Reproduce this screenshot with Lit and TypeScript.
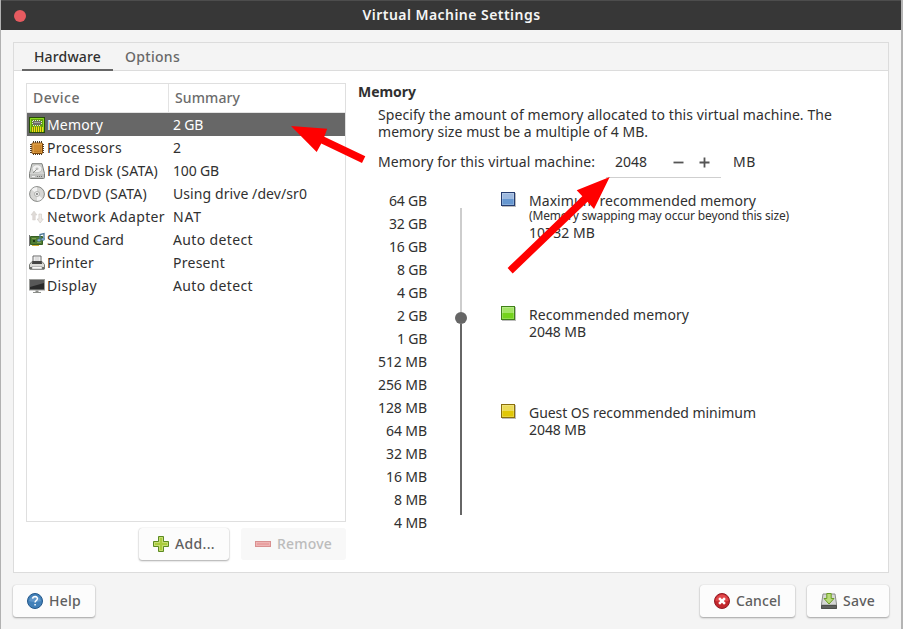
import { LitElement, html, css, svg } from "lit";
import { customElement, property } from "lit/decorators.js";

/** A single line of text whose tracking is adjusted to a given advance width. */
@customElement("text-run")
class TextRun extends LitElement {
  @property({ type: Number }) width = 0;
  @property() text = "";
  static styles = css`
    :host { display: inline-block; white-space: pre; }
    .run { display: inline-block; }
  `;
  render() {
    return html`<span class="run">${this.text}</span>`;
  }
  updated() {
    const run = this.renderRoot.querySelector(".run") as HTMLElement;
    run.style.letterSpacing = "0px";
    const natural = run.getBoundingClientRect().width;
    if (this.width && natural) {
      run.style.letterSpacing = `${(this.width - natural) / this.text.length}px`;
    }
  }
}

const t = (text: string, width: number) => html`<text-run .text=${text} .width=${width}></text-run>`;

const icons: Record<string, unknown> = {
  memory: svg`
    <rect x=".5" y=".5" width="15" height="15" fill="#63a010" stroke="#264d05"/>
    <path d="M1.500 14.500V1.500H14.500V14.500" fill="none" stroke="#8fdc22"/>
    <path d="M2 10H14V15H2Z" fill="#6b8a0a"/>
    <path d="M3.500 10V15M5.500 9.500V15M7.500 9.500V15M9.500 9.500V15M11.500 9.500V15M13.500 10V15" stroke="#f2e012" stroke-width="1.100"/>
    <rect x="4" y="4" width="8" height="4" fill="#6c6e68"/>
    <path d="M4.500 3V4M6.500 3V4M8.500 3V4M10.500 3V4M4.500 8V9M6.500 8V9M8.500 8V9M10.500 8V9M3 4.500H4M12 4.500H13M3 6.500H4M12 6.500H13" stroke="#e6e8e0"/>
    <path d="M5 5.500H11" stroke="#a5a7a1"/>`,
  cpu: svg`
    <path d="M4.500 1V15M6.500 1V15M8.500 1V15M10.500 1V15M12.500 1V15M1 4.500H15M1 6.500H15M1 8.500H15M1 10.500H15M1 12.500H15" stroke="#4b3d2b" stroke-width="1"/>
    <rect x="3" y="3" width="10.500" height="10.500" rx=".8" fill="#cd8a31" stroke="#7c4507"/>
    <rect x="4" y="4" width="8.500" height="8.500" fill="#cf8b31" stroke="#efb762" stroke-width=".8"/>
    <path d="M5 12H12V5" fill="none" stroke="#b97420"/>`,
  disk: svg`
    <path d="M3 .7H13L15.500 10.500V14.500Q15.500 15.500 14.500 15.500H1.500Q.5 15.500 .5 14.500V10.500Z" fill="#d3d4d2" stroke="#7e807d"/>
    <ellipse cx="8" cy="5.700" rx="5" ry="4" fill="#f1f1f0" stroke="#b0b1af" stroke-width=".7"/>
    <ellipse cx="8" cy="5.700" rx="1.500" ry="1.200" fill="#bcbdbb"/>
    <path d="M4 10L7.500 6.500" stroke="#888a86"/>
    <path d="M1 11H15V15H1Z" fill="#bfc0be"/><path d="M8 13.500H13" stroke="#747573" stroke-dasharray="1 1"/><path d="M3 13.500H6" stroke="#efefef"/>`,
  cd: svg`
    <circle cx="8" cy="8" r="7.400" fill="#d6d6d4" stroke="#7c7e7a" stroke-width=".9"/>
    <path d="M8 8L2.500 3.500A7 7 0 0 1 8 1.300ZM8 8L13.500 12.500A7 7 0 0 1 8 14.700Z" fill="#f2f2f2"/>
    <circle cx="8" cy="8" r="2.500" fill="#f3f3f2" stroke="#a3a4a1" stroke-width=".8"/>
    <circle cx="8" cy="8" r=".9" fill="#666"/>`,
  network: svg`
    <path d="M5 2L8 6H6.300V11H3.700V6H2Z" fill="#dedad6" stroke="#d2cdc8" stroke-width=".5"/>
    <path d="M11.200 14L8.200 10H9.900V5H12.500V10H14.300Z" fill="#eeeae6" stroke="#cdc8c2" stroke-width=".6"/>`,
  sound: svg`
    <path d="M.5 3V14" stroke="#777" stroke-width="1"/>
    <path d="M1.500 4.500H13.500V12.500H1.500Z" fill="#4e7c33" stroke="#365f22"/>
    <rect x="4" y="8" width="2" height="2" fill="#1e3813"/><path d="M3 6.500H7M8 10.500H12" stroke="#7fa04f"/>
    <path d="M3 13.500H10" stroke="#d1b035"/>
    <path d="M11 8V2.500L15 1.500V7" fill="none" stroke="#4c7899" stroke-width="1.300"/>
    <ellipse cx="10" cy="8.200" rx="1.600" ry="1.300" fill="#86b2d6" stroke="#41698b" stroke-width=".5"/>
    <ellipse cx="14" cy="7.200" rx="1.600" ry="1.300" fill="#86b2d6" stroke="#41698b" stroke-width=".5"/>`,
  printer: svg`
    <path d="M4 7V1H12V7" fill="#fff" stroke="#666"/>
    <path d="M5.500 3H10.500M5.500 5H10.500" stroke="#bbb"/>
    <path d="M3 6.500H13L15.500 9.500V14H.5V9.500Z" fill="#dcdcd9" stroke="#777974"/>
    <path d="M3.500 6H12.500L13.200 9H2.800Z" fill="#454545"/>
    <path d="M1 12H15V14.500H1Z" fill="#696b68"/><path d="M3 11.500H13V14H3Z" fill="#f9f9f8" stroke="#888" stroke-width=".5"/>`,
  display: svg`
    <rect x=".5" y="1.500" width="15" height="10.500" fill="#2a2a2a" stroke="#9b9c99"/>
    <path d="M1 2H15V5L1 9Z" fill="#585858"/>
    <path d="M6.500 12.500H9.500V14H12V15H4V14H6.500Z" fill="#8b8d89"/>`,
  add: svg`
    <path d="M5.500 .5H10.500V5.500H15.500V10.500H10.500V15.500H5.500V10.500H.5V5.500H5.500Z" fill="#a9cb3c" stroke="#5c8a22"/>
    <path d="M6.500 9V9.500H1.500V6.500H6.500V1.500H9.500V6.500H14.500V9.500H9.500V14.500H6.500V9" fill="none" stroke="#cfe283" stroke-width=".8"/>`,
  remove: svg`
    <rect x=".5" y="5.500" width="15" height="5" fill="#e9a1a1" stroke="#d99090"/>
    <rect x="1.500" y="6.500" width="13" height="3" fill="none" stroke="#f0bcbc" stroke-width=".7"/>`,
  help: svg`
    <circle cx="8" cy="8" r="7.500" fill="#4280b8" stroke="#23578a"/>
    <path d="M2 8A6.200 6.200 0 0 1 14 8Q8 10 2 8Z" fill="#6297c9"/>
    <path d="M5.600 5.600Q5.900 3.600 8.200 3.600Q10.500 3.700 10.400 5.700Q10.300 7 8.900 7.800Q8.100 8.300 8.100 9.600M8.100 11V12.600" fill="none" stroke="#fff" stroke-width="1.500"/>`,
  cancel: svg`
    <circle cx="8" cy="8" r="7.500" fill="#c2272c" stroke="#921a24"/>
    <path d="M1.500 8A6.500 6.500 0 0 1 14.500 8Q8 9 1.500 8Z" fill="#e0474a"/>
    <path d="M5.100 5.100L10.900 10.900M10.900 5.100L5.100 10.900" stroke="#fff" stroke-width="2.500"/>`,
  save: svg`
    <path d="M2 1H14L15.500 11V15.500H.5V11Z" fill="#d6d7d5" stroke="#8b8d8a"/>
    <path d="M.5 12.500H15.500V15.500H.5Z" fill="#5f615e" stroke="#4e504c"/><path d="M1 11.500H15" stroke="#b8bab7"/>
    <path d="M5.800 .5H10.200V5.500H13L8 11L3 5.500H5.800Z" fill="#b9dc78" stroke="#6a9c26"/>`,
};

const icon = (name: string) =>
  html`<svg class="icon" width="16" height="16" viewBox="0 0 16 16">${icons[name]}</svg>`;

const devices: [string, string, number, string, number][] = [
  ["memory", "Memory", 56, "2 GB", 30],
  ["cpu", "Processors", 75, "2", 8],
  ["disk", "Hard Disk (SATA)", 111, "100 GB", 46],
  ["cd", "CD/DVD (SATA)", 100, "Using drive /dev/sr0", 134],
  ["network", "Network Adapter", 118, "NAT", 29],
  ["sound", "Sound Card", 77, "Auto detect", 80],
  ["printer", "Printer", 47, "Present", 52],
  ["display", "Display", 50, "Auto detect", 80],
];

const scale: [string, number][] = [
  ["64 GB", 38], ["32 GB", 38], ["16 GB", 38], ["8 GB", 30], ["4 GB", 30], ["2 GB", 30], ["1 GB", 30],
  ["512 MB", 49], ["256 MB", 49], ["128 MB", 49], ["64 MB", 41], ["32 MB", 41], ["16 MB", 41],
  ["8 MB", 33], ["4 MB", 33],
];

@customElement("app-root")
class AppRoot extends LitElement {
  static styles = css`
    :host { display: block; width: 903px; height: 629px; overflow: hidden; position: relative;
      background: #f4f4f4; color: #303030; font: 14px/17px "Noto Sans", "Open Sans", sans-serif; }
    * { box-sizing: border-box; }
    .window { height: 629px; display: flex; flex-direction: column; border-left: 1px solid #b1b1b1; border-right: 2px solid #b4b4b4; }
    .icon { display: block; flex: none; }
    .title { height: 30px; flex: none; padding: 0 12px; background: #373737;
      border-top: 1px solid #4d4d4d; color: #f5f5f5; display: grid;
      grid-template-columns: 14px 1fr 14px; align-items: center; justify-items: center; font-weight: 600; }
    .title text-run { margin: -2px 0 0 1px; }
    .close { width: 12px; height: 12px; border-radius: 50%; background: #e65b60; }
    .panel { margin: 12px 12px 0; height: 531px; flex: none; border: 1px solid #dcdcdc; background: #fff; }
    .tabs { height: 28px; padding-left: 8px; display: flex; background: #f4f4f4; border-bottom: 1px solid #dcdcdc; font-weight: 500; color: #686868; }
    .tab { height: 28px; padding: 5px 12px 0; }
    .tab.on { color: #303030; border-bottom: 2px solid #666; }
    .content { display: flex; padding: 12px 12px 0; }
    .left { width: 320px; flex: none; }
    .list { height: 439px; border: 1px solid #dfdfdf; }
    .row { display: grid; grid-template-columns: 141px 1fr; height: 23px; align-items: center; }
    .row.head { grid-template-columns: 142px 1fr; height: 29px; border-bottom: 1px solid #e3e3e3; font-weight: 500; color: #6c6c6c; align-items: stretch; }
    .head div { padding: 5px 6px; border-right: 1px solid #e3e3e3; }
    .head div + div { border: 0; }
    .row.sel { background: #676767; color: #fff; height: 24px; margin-top: -1px; border-top: 1px solid #e3e3e3; }
    .name { display: flex; align-items: center; padding-left: 2px; gap: 2px; }
    .sum { padding-left: 5px; }
    .actions { display: flex; justify-content: flex-end; gap: 12px; margin-top: 6px; }
    .btn { display: flex; align-items: center; gap: 6px; height: 32px; padding: 0 14px; background: #fcfcfc; color: #5f5f5f;
      border-radius: 3px; font-weight: 500; box-shadow: 0 0 1px rgba(0,0,0,.2), 0 1px 2px rgba(0,0,0,.32); }
    .btn text-run { margin-top: -2px; }
    .btn.off { background: #f8f8f8; color: #bcbcbc; box-shadow: none; }
    .detail { margin-left: 12px; flex: 1; }
    .h { font-weight: 700; height: 23px; }
    .body { padding-left: 20px; }
    .line { height: 17px; display: flex; }
    .amount { display: flex; align-items: flex-start; margin-top: 7px; height: 34px; }
    .amount > text-run { padding-top: 6px; }
    .spin { width: 115px; height: 31px; border-bottom: 1px solid #cfcfcf; margin: 0 12px 0 11px; display: flex; padding: 6px 0 0 9px; }
    .spin svg { margin: 4px 0 0 26px; }
    .spin svg + svg { margin-left: 15px; }
    .mem { display: flex; }
    .scale { width: 49px; padding-top: 8px; }
    .tick { height: 23px; display: flex; justify-content: flex-end; align-items: center; }
    .slider { width: 12px; margin: 27px 40px 0 28px; height: 307px; display: flex; flex-direction: column; align-items: center; }
    .up { width: 2px; height: 104px; background: #cdcdcd; }
    .knob { width: 12px; height: 12px; border-radius: 50%; background: #666; flex: none; }
    .down { width: 2px; flex: 1; background: #666; }
    .marks { padding-top: 10px; margin-left: -6px; }
    .mark { display: flex; gap: 13px; height: 114px; }
    .mark.mid { height: 98px; }
    .sw { width: 14px; height: 14px; border: 1px solid; flex: none; margin: 1px 1px 0 0; box-shadow: 1px 1px 0 #bcbcbc, inset 0 0 0 1px rgba(255,255,255,.22); }
    .blue { border-color: #243c70; background: linear-gradient(#9db9df 50%, #6697d0 50%); }
    .green { border-color: #3f8118; background: linear-gradient(#a2e464 50%, #74d31b 50%); }
    .gold { border-color: #8a6e0b; background: linear-gradient(#ecdb58 50%, #e1c706 50%); }
    .copy { padding-top: 1px; }
    .small { font-size: 12px; height: 15px; line-height: 14px; }
    .footer { display: flex; gap: 12px; padding: 12px 12px 0 12px; }
    .gap { flex: 1; }
    .arrows { position: absolute; inset: 0; pointer-events: none; }
  `;

  render() {
    return html`
      <div class="window">
        <div class="title"><span class="close"></span>${t("Virtual Machine Settings", 178)}</div>
        <div class="panel">
          <div class="tabs">
            <div class="tab on">${t("Hardware", 67)}</div>
            <div class="tab">${t("Options", 55)}</div>
          </div>
          <div class="content">
            <div class="left">
              <div class="list">
                <div class="row head"><div>${t("Device", 47)}</div><div>${t("Summary", 65)}</div></div>
                ${devices.map(([ic, n, w, s, sw], i) => html`
                  <div class="row ${i === 0 ? "sel" : ""}">
                    <div class="name">${icon(ic)}${t(n, w)}</div>
                    <div class="sum">${t(s, sw)}</div>
                  </div>`)}
              </div>
              <div class="actions">
                <div class="btn">${icon("add")}${t("Add...", 40)}</div>
                <div class="btn off">${icon("remove")}${t("Remove", 55)}</div>
              </div>
            </div>
            <div class="detail">
              <div class="h">${t("Memory", 58)}</div>
              <div class="body">
                <div class="line">${t("Specify the amount of memory allocated to this virtual machine. The", 454)}</div>
                <div class="line">${t("memory size must be a multiple of 4 MB.", 270)}</div>
                <div class="amount">
                  ${t("Memory for this virtual machine:", 217)}
                  <div class="spin">
                    ${t("2048", 32)}
                    <svg width="11" height="11"><path d="M.5 5.500H10.500" stroke="#555" stroke-width="1.800"/></svg>
                    <svg width="11" height="11"><path d="M.5 5.500H10.500M5.500 .5V10.500" stroke="#555" stroke-width="1.800"/></svg>
                  </div>
                  ${t("MB", 23)}
                </div>
                <div class="mem">
                  <div class="scale">${scale.map(([s, w]) => html`<div class="tick">${t(s, w)}</div>`)}</div>
                  <div class="slider"><div class="up"></div><div class="knob"></div><div class="down"></div></div>
                  <div class="marks">
                    <div class="mark"><div class="sw blue"></div><div class="copy">
                      <div class="line">${t("Maximum recommended memory", 227)}</div>
                      <div class="small">${t("(Memory swapping may occur beyond this size)", 260)}</div>
                      <div class="line">${t("10732 MB", 66)}</div></div></div>
                    <div class="mark mid"><div class="sw green"></div><div class="copy">
                      <div class="line">${t("Recommended memory", 160)}</div>
                      <div class="line">${t("2048 MB", 57)}</div></div></div>
                    <div class="mark"><div class="sw gold"></div><div class="copy">
                      <div class="line">${t("Guest OS recommended minimum", 227)}</div>
                      <div class="line">${t("2048 MB", 57)}</div></div></div>
                  </div>
                </div>
              </div>
            </div>
          </div>
        </div>
        <div class="footer">
          <div class="btn">${icon("help")}${t("Help", 32)}</div>
          <div class="gap"></div>
          <div class="btn">${icon("cancel")}${t("Cancel", 45)}</div>
          <div class="btn">${icon("save")}${t("Save", 32)}</div>
        </div>
      </div>
      <svg class="arrows" width="903" height="629" fill="#ff0000">
        <path d="M291 126L327.200 128.700L324.300 136.700L365.300 156.300L362 163L321.300 143.500L316.700 152Z"/>
        <path d="M609.700 177L594 209L587.500 201.700L512.700 273.400L507.600 268L582.300 196.300L576.700 190.300Z"/>
      </svg>
    `;
  }
}
